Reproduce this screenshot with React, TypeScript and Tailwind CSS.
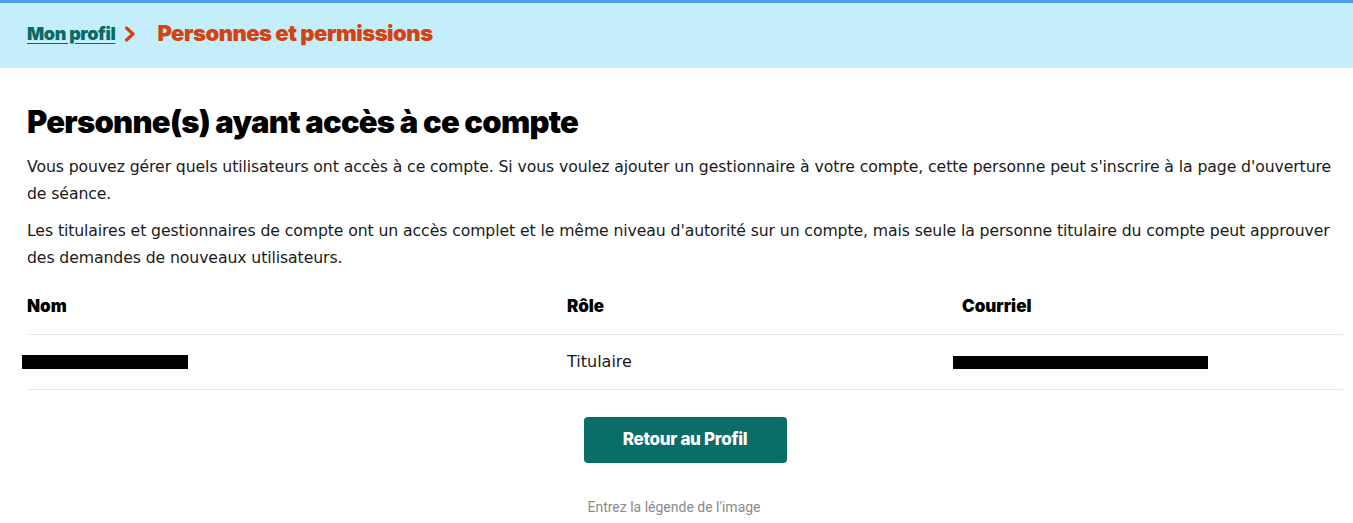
export default function App() {
  return (
    <div className="min-h-screen bg-white text-[#1a1a1a]" style={{ fontFamily: '"DejaVu Sans", "Noto Sans", sans-serif' }}>
      <header className="border-t-[3px] border-[#4a9fe6] bg-[#c4eefc]">
        <nav className="flex h-[65px] items-center pb-[4px] pl-[27px]">
          <a href="#" className="text-[18px] font-black tracking-[-0.4px] text-[#0b6a66] underline underline-offset-[3px]" style={{ fontFamily: 'Inter, sans-serif' }}>
            Mon profil
          </a>
          <svg className="ml-[9px] h-[16px] w-[12px]" viewBox="0 0 12 16" fill="none">
            <path d="M2.5 2 L9 8 L2.5 14" stroke="#d4430f" strokeWidth="3.2" strokeLinecap="round" strokeLinejoin="round" />
          </svg>
          <span className="ml-[21px] text-[22px] font-black tracking-[-0.5px] text-[#d4430f]" style={{ fontFamily: 'Inter, sans-serif' }}>
            Personnes et permissions
          </span>
        </nav>
      </header>

      <main className="pl-[27px] pr-[10px] pt-[35px]">
        <h1 className="text-[31px] font-black leading-[38px] tracking-[-0.75px] text-black" style={{ fontFamily: 'Inter, sans-serif' }}>
          Personne(s) ayant accès à ce compte
        </h1>
        <p className="mt-[12px] text-[15.7px] leading-[27px] tracking-[-0.1px]">
          Vous pouvez gérer quels utilisateurs ont accès à ce compte. Si vous voulez ajouter un gestionnaire à votre compte, cette personne peut s'inscrire à la page d'ouverture de séance.
        </p>
        <p className="mt-[10px] text-[15.7px] leading-[27px] tracking-[-0.1px]">
          Les titulaires et gestionnaires de compte ont un accès complet et le même niveau d'autorité sur un compte, mais seule la personne titulaire du compte peut approuver des demandes de nouveaux utilisateurs.
        </p>

        <div className="mt-[8px]">
          <div className="grid h-[56px] grid-cols-[540px_395px_1fr] items-center border-b border-[#e8e8e8] text-[17px] font-black text-black" style={{ fontFamily: 'Inter, sans-serif' }}>
            <div>Nom</div>
            <div>Rôle</div>
            <div>Courriel</div>
          </div>
          <div className="grid h-[55px] grid-cols-[540px_395px_1fr] items-center border-b border-[#e8e8e8] text-[16px]">
            <div>
              <div className="-ml-[5px] h-[14px] w-[166px] bg-black" />
            </div>
            <div>Titulaire</div>
            <div>
              <div className="-ml-[9px] h-[13px] w-[255px] bg-black" />
            </div>
          </div>
        </div>

        <div className="mt-[27px] flex justify-center">
          <button className="h-[46px] w-[203px] rounded-[4px] bg-[#0b6d68] text-[17px] font-extrabold tracking-[-0.3px] text-white" style={{ fontFamily: 'Inter, sans-serif' }}>
            Retour au Profil
          </button>
        </div>
        <p className="mt-[34px] pr-[22px] text-center text-[14px] text-[#8a8a8a]" style={{ fontFamily: 'Roboto, sans-serif' }}>
          Entrez la légende de l'image
        </p>
      </main>
    </div>
  )
}
